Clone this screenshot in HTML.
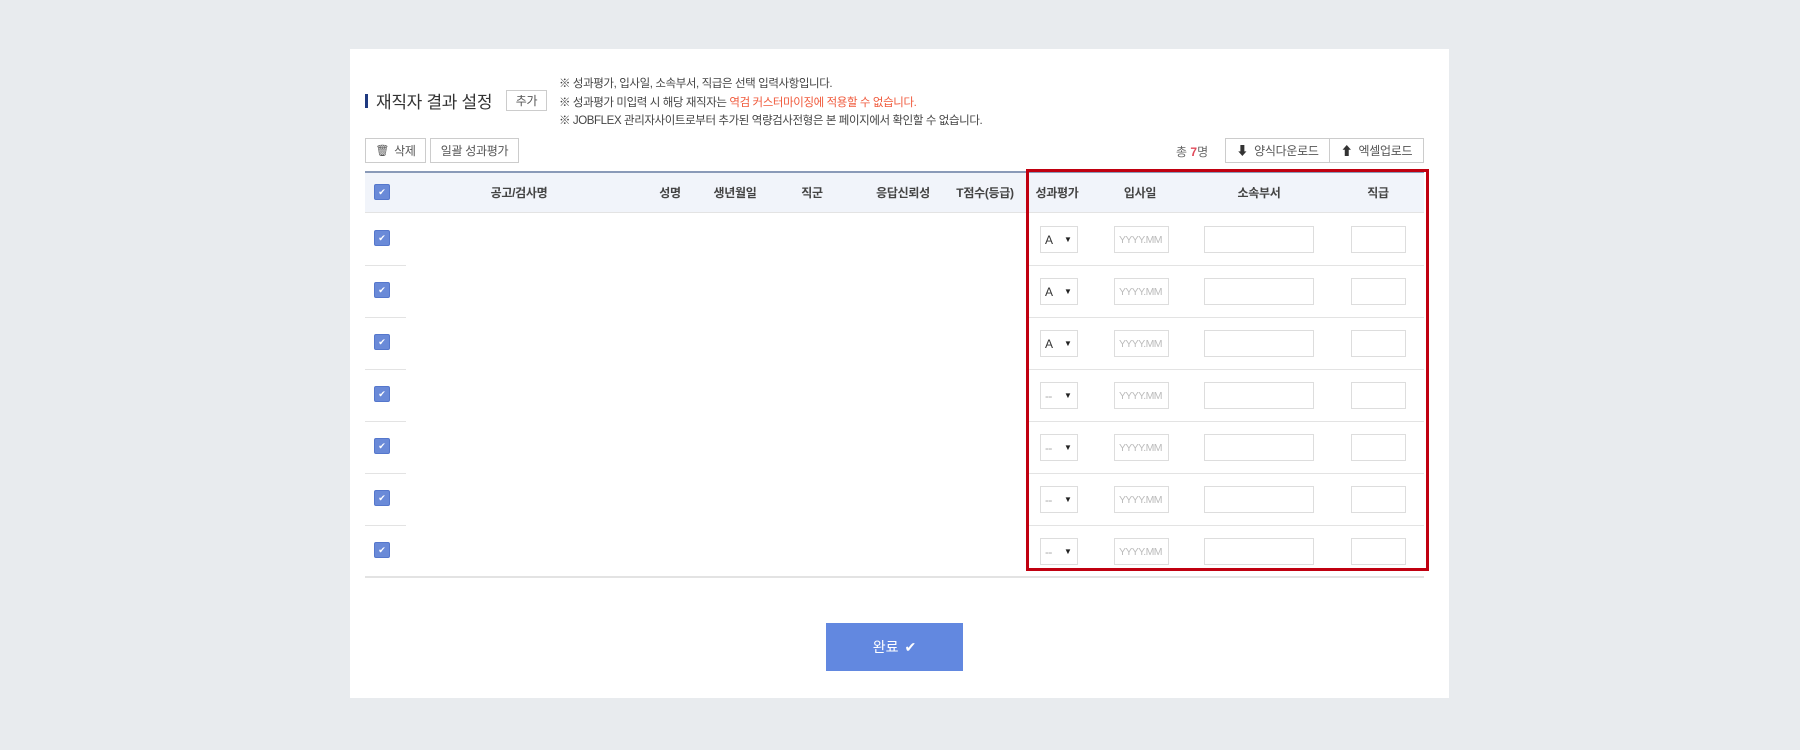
<!DOCTYPE html>
<html><head><meta charset="utf-8"><style>
*{box-sizing:border-box;margin:0;padding:0}
body{width:1800px;height:750px;background:#e8ebee;font-family:"Liberation Sans","Noto Sans CJK KR",sans-serif;position:relative;overflow:hidden;color:#333}
.a{position:absolute}
.panel{left:350px;top:49px;width:1099px;height:649px;background:#fff}
.btn{position:absolute;border:1px solid #ccc;background:#fff;font-size:12px;color:#555;display:flex;align-items:center;justify-content:center;letter-spacing:-0.3px}
.note{left:559px;font-size:11.5px;color:#444;white-space:nowrap;letter-spacing:-0.4px}
.hd{top:184px;font-size:12px;color:#444;transform:translateX(-50%);white-space:nowrap;font-weight:bold;letter-spacing:-0.3px}
.cb{width:16px;height:16px;background:#6a8ad8;border:1px solid #5577cc;border-radius:2px;display:flex;align-items:center;justify-content:center;color:#fff;font-size:9px}
.line{height:1px;background:#e3e3e3}
.inp{position:absolute;border:1px solid #ddd;height:27px;background:#fff;font-size:10.5px;color:#bbb;display:flex;align-items:center;letter-spacing:-0.6px}
</style></head><body>
<div class="a panel"></div>
<div class="a" style="left:365px;top:94px;width:3px;height:14px;background:#1f3a80"></div>
<div class="a" style="left:376px;top:88px;font-size:17px;color:#333;letter-spacing:-0.3px">재직자 결과 설정</div>
<div class="btn" style="left:506px;top:90px;width:41px;height:21px">추가</div>
<div class="a note" style="top:75px">※ 성과평가, 입사일, 소속부서, 직급은 선택 입력사항입니다.</div>
<div class="a note" style="top:94px">※ 성과평가 미입력 시 해당 재직자는 <span style="color:#f05a3c">역검 커스터마이징에 적용할 수 없습니다.</span></div>
<div class="a note" style="top:112px">※ JOBFLEX 관리자사이트로부터 추가된 역량검사전형은 본 페이지에서 확인할 수 없습니다.</div>
<div class="btn" style="left:365px;top:138px;width:61px;height:25px"><span style="font-size:11px;margin-right:5px">🗑</span>삭제</div>
<div class="btn" style="left:430px;top:138px;width:89px;height:25px">일괄 성과평가</div>
<div class="a" style="left:1176px;top:143px;font-size:12px;color:#666">총 <b style="color:#e04a5a">7</b>명</div>
<div class="btn" style="left:1225px;top:138px;width:105px;height:25px"><span style="margin-right:6px;color:#333">⬇</span>양식다운로드</div>
<div class="btn" style="left:1329px;top:138px;width:95px;height:25px"><span style="margin-right:6px;color:#333">⬆</span>엑셀업로드</div>
<div class="a" style="left:365px;top:171px;width:1059px;height:42px;background:#f1f4fa;border-top:2px solid #8a9ab8;border-bottom:1px solid #e3e3e3"></div>
<div class="a cb" style="left:374px;top:184px">✔</div>
<div class="a hd" style="left:519px">공고/검사명</div>
<div class="a hd" style="left:670px">성명</div>
<div class="a hd" style="left:735px">생년월일</div>
<div class="a hd" style="left:812px">직군</div>
<div class="a hd" style="left:903px">응답신뢰성</div>
<div class="a hd" style="left:985px">T점수(등급)</div>
<div class="a hd" style="left:1057px">성과평가</div>
<div class="a hd" style="left:1140px">입사일</div>
<div class="a hd" style="left:1259px">소속부서</div>
<div class="a hd" style="left:1378px">직급</div>
<div id="rows"></div>
<div class="a line" style="left:365px;top:576px;width:1059px;height:2px"></div>
<div class="a" style="left:1026px;top:169px;width:403px;height:402px;border:3px solid #c00010"></div>
<div class="a" style="left:826px;top:623px;width:137px;height:48px;background:#6288e0;color:#fff;font-size:14px;display:flex;align-items:center;justify-content:center">완료 <span style="margin-left:6px">✔</span></div>
<script>
var h='';var v=['A','A','A','--','--','--','--'];
for(var i=0;i<7;i++){var t=213+i*52;
h+='<div class="a cb" style="left:374px;top:'+(t+17)+'px">✔</div>';
if(i<6){h+='<div class="a line" style="left:365px;top:'+(t+52)+'px;width:41px"></div><div class="a line" style="left:1026px;top:'+(t+52)+'px;width:398px"></div>';}
h+='<div class="inp" style="left:1040px;top:'+(t+13)+'px;width:38px;color:'+(v[i]=='A'?'#333':'#aaa')+';font-size:12px;padding-left:4px">'+v[i]+'<span style="position:absolute;left:23px;font-size:8px;color:#222">▼</span></div>';
h+='<div class="inp" style="left:1114px;top:'+(t+13)+'px;width:55px;padding-left:4px">YYYY.MM</div>';
h+='<div class="inp" style="left:1204px;top:'+(t+13)+'px;width:110px"></div>';
h+='<div class="inp" style="left:1351px;top:'+(t+13)+'px;width:55px"></div>';}
document.getElementById('rows').innerHTML=h;
</script>
</body></html>
